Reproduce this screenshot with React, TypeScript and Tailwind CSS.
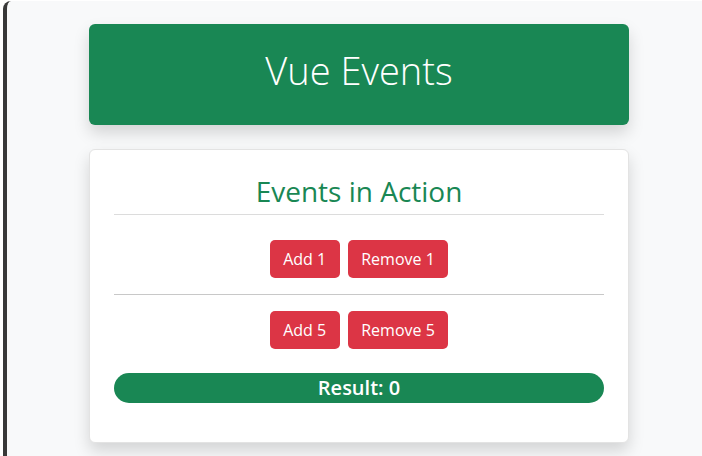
import { useState } from 'react';

const font = { fontFamily: '"Segoe UI", "Open Sans", "Noto Sans", sans-serif' };

function ActionButton({ label, onClick }: { label: string; onClick: () => void }) {
  return (
    <button
      onClick={onClick}
      className="h-[38px] rounded-[5px] bg-[#dc3545] px-[13.5px] text-[16px] text-white"
    >
      {label}
    </button>
  );
}

export default function App() {
  const [result, setResult] = useState(0);

  return (
    <div className="h-[456px] w-[702px] overflow-hidden bg-white pl-[3px] pt-[1px]" style={font}>
      <div className="h-full rounded-tl-[8px] border-l-4 border-[#383838] bg-[#f8f9fa] pl-[82px] pt-[23px]">
        <div className="flex h-[101px] w-[540px] items-center justify-center rounded-[6px] bg-[#198754] pb-[10px] shadow-[0_8px_16px_rgba(0,0,0,0.15)]">
          <h1 className="text-[38px] font-light leading-[46px] text-white">Vue Events</h1>
        </div>

        <div className="mt-[24px] w-[540px] rounded-[6px] border border-[#e3e3e3] bg-white px-[24px] pb-[39px] pt-[24px] shadow-[0_8px_16px_rgba(0,0,0,0.15)]">
          <h2 className="text-center text-[28px] leading-[34px] text-[#198754]">Events in Action</h2>
          <hr className="mt-[6px] border-t border-[#dcdcdc]" />

          <div className="mt-[25px] flex justify-center gap-2">
            <ActionButton label="Add 1" onClick={() => setResult(result + 1)} />
            <ActionButton label="Remove 1" onClick={() => setResult(result - 1)} />
          </div>
          <hr className="mt-[16px] border-t border-[#c8c8c8]" />

          <div className="mt-[16px] flex justify-center gap-2">
            <ActionButton label="Add 5" onClick={() => setResult(result + 5)} />
            <ActionButton label="Remove 5" onClick={() => setResult(result - 5)} />
          </div>

          <div className="mt-[24px] h-[30px] rounded-full bg-[#198754] text-center text-[20px] font-semibold leading-[30px] text-white">
            Result: {result}
          </div>
        </div>
      </div>
    </div>
  );
}
